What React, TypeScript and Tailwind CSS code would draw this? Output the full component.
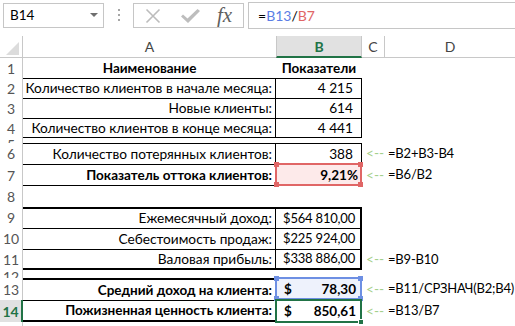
import React from 'react';

type RowDef = {
  n: string;
  h: string;
  a?: string;
  b?: React.ReactNode;
  aCls?: string;
  bCls?: string;
  d?: string;
  hl?: 'red' | 'blue' | 'active';
};

const money = (v: string) => (
  <>
    <span>$</span>
    <span>{v}</span>
  </>
);

const BOLD = 'font-bold text-[13.5px]';

const rows: RowDef[] = [
  { n: '1', h: 'h-[20px]', a: 'Наименование', aCls: `${BOLD} justify-center`, b: 'Показатели', bCls: `${BOLD} justify-center` },
  { n: '2', h: 'h-[20px]', a: 'Количество клиентов в начале месяца:', aCls: 'justify-end pr-[3px] border-t border-r border-black', b: '4 215', bCls: 'justify-end pr-[8px] border-t border-r border-black' },
  { n: '3', h: 'h-[20px]', a: 'Новые клиенты:', aCls: 'justify-end pr-[3px] border-t border-r border-black', b: '614', bCls: 'justify-end pr-[8px] border-t border-r border-black' },
  { n: '4', h: 'h-[20px]', a: 'Количество клиентов в конце месяца:', aCls: 'justify-end pr-[3px] border-y border-r border-black', b: '4 441', bCls: 'justify-end pr-[8px] border-y border-r border-black' },
  { n: '5', h: 'h-[5px]' },
  { n: '6', h: 'h-[21px]', a: 'Количество потерянных клиентов:', aCls: 'justify-end pr-[3px] border-t border-r border-black', b: '388', bCls: 'justify-end pr-[8px] border-t border-r border-black', d: '=B2+B3-B4' },
  { n: '7', h: 'h-[22px]', a: 'Показатель оттока клиентов:', aCls: `${BOLD} justify-end pr-[3px] border-y border-r border-black`, b: '9,21%', bCls: `${BOLD} justify-end pr-[4px] bg-[#fdeaea]`, d: '=B6/B2', hl: 'red' },
  { n: '8', h: 'h-[21px]' },
  { n: '9', h: 'h-[21px]', a: 'Ежемесячный доход:', aCls: 'justify-end pr-[3px] border-t-2 border-r border-black', b: money('564 810,00'), bCls: 'justify-between pl-[7px] pr-[5px] text-[13px] tracking-[-0.2px] border-t-2 border-r-2 border-black' },
  { n: '10', h: 'h-[21px]', a: 'Себестоимость продаж:', aCls: 'justify-end pr-[3px] border-t border-r border-black', b: money('225 924,00'), bCls: 'justify-between pl-[7px] pr-[5px] text-[13px] tracking-[-0.2px] border-t border-r-2 border-black' },
  { n: '11', h: 'h-[21px]', a: 'Валовая прибыль:', aCls: 'justify-end pr-[3px] border-t border-b-2 border-r border-black', b: money('338 886,00'), bCls: 'justify-between pl-[7px] pr-[5px] text-[13px] tracking-[-0.2px] border-t border-b-2 border-r-2 border-black', d: '=B9-B10' },
  { n: '12', h: 'h-[8px]' },
  { n: '13', h: 'h-[22px]', a: 'Средний доход на клиента:', aCls: `${BOLD} justify-end pr-[3px] border-t-2 border-r border-black`, b: money('78,30'), bCls: `${BOLD} justify-between pl-[8px] pr-[6px] bg-[#eef2fc]`, d: '=B11/СРЗНАЧ(B2;B4)', hl: 'blue' },
  { n: '14', h: 'h-[22px]', a: 'Пожизненная ценность клиента:', aCls: `${BOLD} justify-end pr-[3px] border-t border-b-2 border-r border-black`, b: money('850,61'), bCls: `${BOLD} justify-between pl-[8px] pr-[6px]`, d: '=B13/B7', hl: 'active' },
  { n: '', h: 'h-[4px]' },
];

function Highlight({ kind }: { kind: 'red' | 'blue' | 'active' }) {
  if (kind === 'active') {
    return (
      <div className="pointer-events-none absolute -left-[1px] -top-[1px] right-0 -bottom-[1px] z-10 border-2 border-[#217346]">
        <div className="absolute -right-[4px] -bottom-[4px] h-[6px] w-[6px] border border-white bg-[#217346]" />
      </div>
    );
  }
  const border = kind === 'red' ? 'border-[#e06666]' : 'border-[#6d8fe3]';
  const sq = kind === 'red' ? 'bg-[#e06666]' : 'bg-[#6d8fe3]';
  return (
    <div className={`pointer-events-none absolute -left-[1px] -top-[1px] right-0 bottom-0 z-10 border-2 ${border}`}>
      <div className={`absolute -left-[3px] -top-[3px] h-[5px] w-[5px] ${sq}`} />
      <div className={`absolute -right-[3px] -top-[3px] h-[5px] w-[5px] ${sq}`} />
      <div className={`absolute -left-[3px] -bottom-[3px] h-[5px] w-[5px] ${sq}`} />
      <div className={`absolute -right-[3px] -bottom-[3px] h-[5px] w-[5px] ${sq}`} />
    </div>
  );
}

function FormulaBar() {
  return (
    <div className="flex h-[36px] items-start pt-[3px] text-[13.5px] text-black">
      <div className="ml-[3px] flex h-[25px] w-[101px] items-center justify-between border border-[#c6c6c6] pl-[6px] pr-[5px]">
        <span>B14</span>
        <svg width="8" height="5" viewBox="0 0 8 5">
          <path d="M0 0 L8 0 L4 4 Z" fill="#6f6f6f" />
        </svg>
      </div>
      <div className="flex w-[29px] flex-col items-center gap-[3px] pt-[6px]">
        <div className="h-[2px] w-[2px] bg-[#a6a6a6]" />
        <div className="h-[2px] w-[2px] bg-[#a6a6a6]" />
        <div className="h-[2px] w-[2px] bg-[#a6a6a6]" />
      </div>
      <div className="flex h-[25px] w-[111px] items-center border border-[#c6c6c6]">
        <svg className="ml-[11px]" width="16" height="16" viewBox="0 0 16 16">
          <path d="M1.5 1.5 L14.5 14.5 M14.5 1.5 L1.5 14.5" stroke="#bcbcbc" strokeWidth="1.6" />
        </svg>
        <svg className="ml-[19px]" width="21" height="16" viewBox="0 0 21 16">
          <path d="M1 8.5 L3 6.5 L7.5 10.5 L17.5 1 L20 3 L8 15 Z" fill="#bdbdbd" />
        </svg>
        <span className="ml-[16px] font-['Liberation_Serif',serif] text-[21px] italic leading-none text-[#5f5f5f]">fx</span>
      </div>
      <div className="ml-[4px] -mt-[1px] flex h-[27px] flex-1 items-center border-y border-l border-[#c6c6c6] pl-[9px] text-[14px]">
        <span>=</span>
        <span className="text-[#5b7ee5]">B13</span>
        <span>/</span>
        <span className="text-[#e06666]">B7</span>
      </div>
    </div>
  );
}

export default function App() {
  return (
    <div className="h-[326px] w-[515px] overflow-hidden bg-white font-['Lato',sans-serif] text-[13.7px] text-black">
      <FormulaBar />
      <div className="grid grid-cols-[23px_253px_86px_23px_130px]">
        {/* column headers */}
        <div className="relative h-[22px] border-b border-r border-[#c8c8c8]">
          <svg className="absolute bottom-[2px] right-[3px]" width="13" height="13" viewBox="0 0 13 13">
            <path d="M13 0 L13 13 L0 13 Z" fill="#dcdcdc" />
          </svg>
        </div>
        <div className="flex h-[22px] items-center justify-center border-b border-[#c8c8c8] text-[14px] text-[#444]">A</div>
        <div className="flex h-[22px] items-center justify-center border-b-2 border-x border-b-[#217346] border-x-[#c8c8c8] bg-[#e1e1e1] text-[14px] font-bold text-[#217346]">B</div>
        <div className="flex h-[22px] items-center justify-center border-b border-r border-[#c8c8c8] text-[14px] text-[#444]">C</div>
        <div className="flex h-[22px] items-center justify-center border-b border-[#c8c8c8] text-[14px] text-[#444]">D</div>

        {rows.map((r, i) => {
          const sel = r.n === '14';
          const tiny = r.n === '5' || r.n === '12';
          return (
            <React.Fragment key={i}>
              <div
                className={`${r.h} relative z-[5] flex justify-center overflow-hidden text-[14px] ${tiny ? 'items-start leading-[14px]' : 'items-center'} ${
                  sel
                    ? 'border-r-2 border-[#217346] bg-[#e1e1e1] font-bold text-[#217346]'
                    : 'border-r border-[#c8c8c8] bg-white text-[#555]'
                }`}
              >
                {r.n}
              </div>
              <div className={`${r.h} flex items-center overflow-visible whitespace-nowrap ${r.aCls ?? ''}`}>{r.a}</div>
              <div className={`${r.h} relative flex items-center whitespace-nowrap ${r.bCls ?? ''}`}>
                {r.b}
                {r.hl && <Highlight kind={r.hl} />}
              </div>
              <div className={`${r.h} flex items-center whitespace-nowrap pl-[4px] text-[#a4cf8a]`}>{r.d ? '<--' : ''}</div>
              <div className={`${r.h} flex items-center whitespace-nowrap pl-[3px] text-[13px] tracking-[-0.2px]`}>{r.d ?? ''}</div>
            </React.Fragment>
          );
        })}
      </div>
    </div>
  );
}
